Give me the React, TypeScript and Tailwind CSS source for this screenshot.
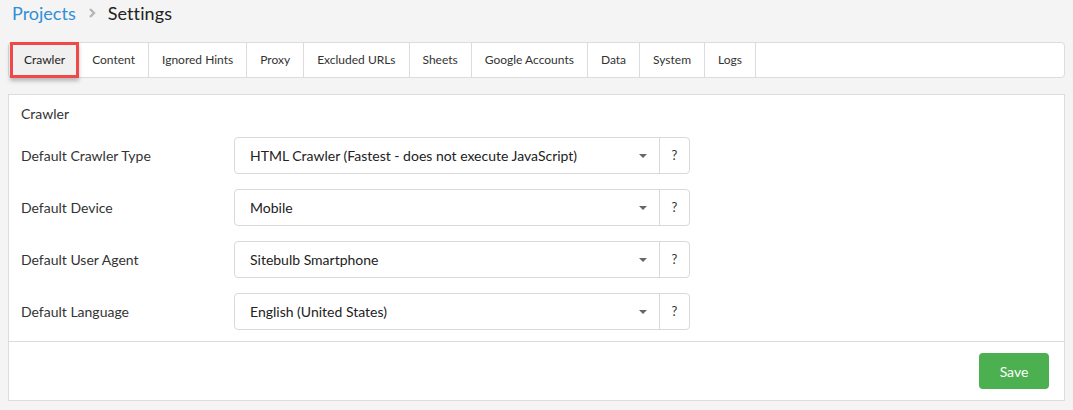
import React from "react";

const tabs = [
  "Crawler",
  "Content",
  "Ignored Hints",
  "Proxy",
  "Excluded URLs",
  "Sheets",
  "Google Accounts",
  "Data",
  "System",
  "Logs",
];

const rows = [
  { label: "Default Crawler Type", value: "HTML Crawler (Fastest - does not execute JavaScript)" },
  { label: "Default Device", value: "Mobile" },
  { label: "Default User Agent", value: "Sitebulb Smartphone" },
  { label: "Default Language", value: "English (United States)" },
];

function SelectRow({ label, value }: { label: string; value: string }) {
  return (
    <div className="flex items-center">
      <div className="w-[213px] text-[14px] text-[#333]">{label}</div>
      <div className="flex h-[37px] w-[456px] rounded-[4px] border border-[#d9d9d9] bg-white">
        <div className="flex flex-1 items-center justify-between pl-[15px] pr-[12px] text-[14px] text-[#222]">
          <span>{value}</span>
          <span className="h-0 w-0 border-x-[4px] border-t-[4px] border-x-transparent border-t-[#666]" />
        </div>
        <div className="flex w-[30px] items-center justify-center border-l border-[#d9d9d9] text-[13px] text-[#333]">
          ?
        </div>
      </div>
    </div>
  );
}

export default function App() {
  return (
    <div
      className="h-[410px] w-[1073px] bg-[#f4f4f4] px-[8px] pt-[1px]"
      style={{ fontFamily: "Lato, 'Open Sans', sans-serif" }}
    >
      <div className="flex h-[24px] items-center pl-[4px] text-[18px]">
        <span className="text-[#2f8fd8]">Projects</span>
        <svg width="14" height="14" viewBox="0 0 14 14" className="mx-[9px]">
          <path d="M5 3 L9 7 L5 11" fill="none" stroke="#b5b5b5" strokeWidth="2.4" />
        </svg>
        <span className="text-[#222] tracking-[0.1px]">Settings</span>
      </div>

      <div className="mt-[17px] flex h-[36px] rounded-[4px] border border-[#dcdcdc] bg-white">
        {tabs.map((t, i) =>
          i === 0 ? (
            <div
              key={t}
              className="relative z-10 -my-[1px] ml-[1px] flex items-center border-[3px] border-[#f04848] bg-[#f0f0f0] px-[11px] text-[12px] text-[#222] shadow-[0_3px_4px_rgba(0,0,0,0.25)]"
            >
              {t}
            </div>
          ) : (
            <div
              key={t}
              className="flex items-center border-r border-[#dcdcdc] px-[13px] text-[12px] text-[#333]"
            >
              {t}
            </div>
          )
        )}
      </div>

      <div className="mt-[16px] border border-[#dcdcdc] bg-white">
        <div className="px-[12px] pt-[8px] pb-[11px]">
          <div className="text-[14px] leading-[21px] text-[#333]">Crawler</div>
          <div className="mt-[13px] flex flex-col gap-[15px]">
            {rows.map((r) => (
              <SelectRow key={r.label} label={r.label} value={r.value} />
            ))}
          </div>
        </div>
        <div className="flex justify-end border-t border-[#dcdcdc] px-[15px] pt-[11px] pb-[11px]">
          <button className="h-[36px] w-[70px] rounded-[4px] bg-[#4caf50] text-[14px] text-white">
            Save
          </button>
        </div>
      </div>
    </div>
  );
}
